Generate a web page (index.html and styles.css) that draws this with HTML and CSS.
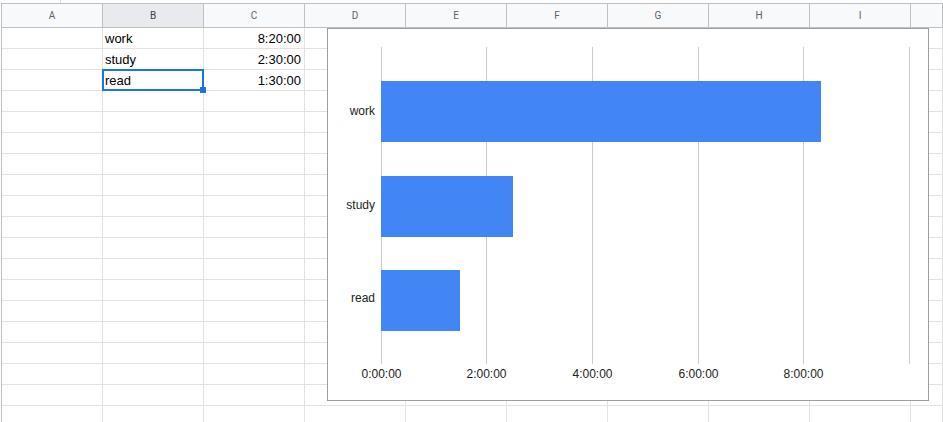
FILE: index.html
```html
<!DOCTYPE html>
<html>
<head>
<meta charset="utf-8">
<link rel="stylesheet" href="styles.css">
</head>
<body>
<div class="topbar"><span class="tick"></span></div>
<div class="sheet">
  <div class="hrow">
    <div class="hcell">A</div><div class="hcell sel">B</div><div class="hcell">C</div><div class="hcell">D</div><div class="hcell">E</div><div class="hcell">F</div><div class="hcell">G</div><div class="hcell">H</div><div class="hcell">I</div><div class="hcell"></div>
  </div>
  <div class="row"><div class="cell"></div><div class="cell">work</div><div class="cell num">8:20:00</div><div class="cell"></div><div class="cell"></div><div class="cell"></div><div class="cell"></div><div class="cell"></div><div class="cell"></div><div class="cell"></div></div>
  <div class="row"><div class="cell"></div><div class="cell">study</div><div class="cell num">2:30:00</div><div class="cell"></div><div class="cell"></div><div class="cell"></div><div class="cell"></div><div class="cell"></div><div class="cell"></div><div class="cell"></div></div>
  <div class="row"><div class="cell"></div><div class="cell active">read<span class="selbox"></span><span class="handle"></span></div><div class="cell num">1:30:00</div><div class="cell"></div><div class="cell"></div><div class="cell"></div><div class="cell"></div><div class="cell"></div><div class="cell"></div><div class="cell"></div></div>
  <div class="row"><div class="cell"></div><div class="cell"></div><div class="cell"></div><div class="cell"></div><div class="cell"></div><div class="cell"></div><div class="cell"></div><div class="cell"></div><div class="cell"></div><div class="cell"></div></div>
  <div class="row"><div class="cell"></div><div class="cell"></div><div class="cell"></div><div class="cell"></div><div class="cell"></div><div class="cell"></div><div class="cell"></div><div class="cell"></div><div class="cell"></div><div class="cell"></div></div>
  <div class="row"><div class="cell"></div><div class="cell"></div><div class="cell"></div><div class="cell"></div><div class="cell"></div><div class="cell"></div><div class="cell"></div><div class="cell"></div><div class="cell"></div><div class="cell"></div></div>
  <div class="row"><div class="cell"></div><div class="cell"></div><div class="cell"></div><div class="cell"></div><div class="cell"></div><div class="cell"></div><div class="cell"></div><div class="cell"></div><div class="cell"></div><div class="cell"></div></div>
  <div class="row"><div class="cell"></div><div class="cell"></div><div class="cell"></div><div class="cell"></div><div class="cell"></div><div class="cell"></div><div class="cell"></div><div class="cell"></div><div class="cell"></div><div class="cell"></div></div>
  <div class="row"><div class="cell"></div><div class="cell"></div><div class="cell"></div><div class="cell"></div><div class="cell"></div><div class="cell"></div><div class="cell"></div><div class="cell"></div><div class="cell"></div><div class="cell"></div></div>
  <div class="row"><div class="cell"></div><div class="cell"></div><div class="cell"></div><div class="cell"></div><div class="cell"></div><div class="cell"></div><div class="cell"></div><div class="cell"></div><div class="cell"></div><div class="cell"></div></div>
  <div class="row"><div class="cell"></div><div class="cell"></div><div class="cell"></div><div class="cell"></div><div class="cell"></div><div class="cell"></div><div class="cell"></div><div class="cell"></div><div class="cell"></div><div class="cell"></div></div>
  <div class="row"><div class="cell"></div><div class="cell"></div><div class="cell"></div><div class="cell"></div><div class="cell"></div><div class="cell"></div><div class="cell"></div><div class="cell"></div><div class="cell"></div><div class="cell"></div></div>
  <div class="row"><div class="cell"></div><div class="cell"></div><div class="cell"></div><div class="cell"></div><div class="cell"></div><div class="cell"></div><div class="cell"></div><div class="cell"></div><div class="cell"></div><div class="cell"></div></div>
  <div class="row"><div class="cell"></div><div class="cell"></div><div class="cell"></div><div class="cell"></div><div class="cell"></div><div class="cell"></div><div class="cell"></div><div class="cell"></div><div class="cell"></div><div class="cell"></div></div>
  <div class="row"><div class="cell"></div><div class="cell"></div><div class="cell"></div><div class="cell"></div><div class="cell"></div><div class="cell"></div><div class="cell"></div><div class="cell"></div><div class="cell"></div><div class="cell"></div></div>
  <div class="row"><div class="cell"></div><div class="cell"></div><div class="cell"></div><div class="cell"></div><div class="cell"></div><div class="cell"></div><div class="cell"></div><div class="cell"></div><div class="cell"></div><div class="cell"></div></div>
  <div class="row"><div class="cell"></div><div class="cell"></div><div class="cell"></div><div class="cell"></div><div class="cell"></div><div class="cell"></div><div class="cell"></div><div class="cell"></div><div class="cell"></div><div class="cell"></div></div>
  <div class="row"><div class="cell"></div><div class="cell"></div><div class="cell"></div><div class="cell"></div><div class="cell"></div><div class="cell"></div><div class="cell"></div><div class="cell"></div><div class="cell"></div><div class="cell"></div></div>
  <div class="row"><div class="cell"></div><div class="cell"></div><div class="cell"></div><div class="cell"></div><div class="cell"></div><div class="cell"></div><div class="cell"></div><div class="cell"></div><div class="cell"></div><div class="cell"></div></div>

  <div class="chart">
    <svg class="plot" width="600" height="371" viewBox="0 0 600 371" xmlns="http://www.w3.org/2000/svg">
      <g stroke="#cccccc" stroke-width="1">
        <line x1="53.5" y1="18" x2="53.5" y2="335"/>
        <line x1="158.5" y1="18" x2="158.5" y2="335"/>
        <line x1="264.5" y1="18" x2="264.5" y2="335"/>
        <line x1="370.5" y1="18" x2="370.5" y2="335"/>
        <line x1="475.5" y1="18" x2="475.5" y2="335"/>
        <line x1="581.5" y1="18" x2="581.5" y2="335"/>
      </g>
      <g fill="#4285f4">
        <rect x="53" y="52" width="440" height="61"/>
        <rect x="53" y="147" width="132" height="61"/>
        <rect x="53" y="241" width="79" height="61"/>
      </g>
      <g class="lbl" text-anchor="end">
        <text x="47" y="86">work</text>
        <text x="47" y="180">study</text>
        <text x="47" y="273">read</text>
      </g>
      <g class="lbl" text-anchor="middle">
        <text x="53.5" y="349">0:00:00</text>
        <text x="158.5" y="349">2:00:00</text>
        <text x="264.5" y="349">4:00:00</text>
        <text x="370.5" y="349">6:00:00</text>
        <text x="475.5" y="349">8:00:00</text>
      </g>
    </svg>
  </div>
</div>
</body>
</html>
```

FILE: styles.css
```css
html, body {
  margin: 0;
  padding: 0;
  background: #ffffff;
  overflow: hidden;
}
body {
  width: 943px;
  height: 422px;
  font-family: "Liberation Sans", Arial, sans-serif;
}
.topbar {
  height: 3px;
  position: relative;
}
.tick {
  display: block;
  margin-left: 60px;
  width: 1px;
  height: 3px;
  background: #dadce0;
}
.sheet {
  position: relative;
  margin-left: 1px;
  border-left: 1px solid #c0c0c0;
}
.hrow, .row {
  display: grid;
  grid-template-columns: repeat(9, 101px) 1fr;
}
.hrow {
  height: 25px;
  box-sizing: border-box;
  border-top: 1px solid #c0c0c0;
  border-bottom: 1px solid #c0c0c0;
  background: #f8f9fa;
}
.hcell {
  box-sizing: border-box;
  border-right: 1px solid #c0c0c0;
  display: flex;
  align-items: center;
  justify-content: center;
  font-family: Roboto, "Liberation Sans", Arial, sans-serif;
  font-size: 10px;
  color: #5f6368;
}
.hcell.sel {
  background: #e8eaed;
  color: #3c4043;
}
.row {
  height: 21px;
  grid-template-rows: 21px;
}
.cell {
  position: relative;
  box-sizing: border-box;
  height: 21px;
  border-right: 1px solid #e2e2e2;
  border-bottom: 1px solid #e2e2e2;
  font-size: 13px;
  line-height: 19px;
  color: #000000;
  padding: 1px 3px 0 2px;
  white-space: nowrap;
}
.cell.num {
  text-align: right;
}
.cell.active {
  z-index: 3;
}
.selbox {
  position: absolute;
  left: -1px;
  top: -1px;
  width: 102px;
  height: 22px;
  box-sizing: border-box;
  border: 2px solid #1a73e8;
}
.handle {
  position: absolute;
  left: 97px;
  top: 17px;
  width: 6px;
  height: 6px;
  background: #1a73e8;
}
.chart {
  position: absolute;
  z-index: 4;
  left: 325px;
  top: 25px;
  width: 602px;
  height: 373px;
  box-sizing: border-box;
  border: 1px solid #9e9e9e;
  background: #ffffff;
}
.plot {
  display: block;
}
.lbl {
  font-family: "Liberation Sans", Arial, sans-serif;
  font-size: 12px;
  fill: #222222;
}
```
